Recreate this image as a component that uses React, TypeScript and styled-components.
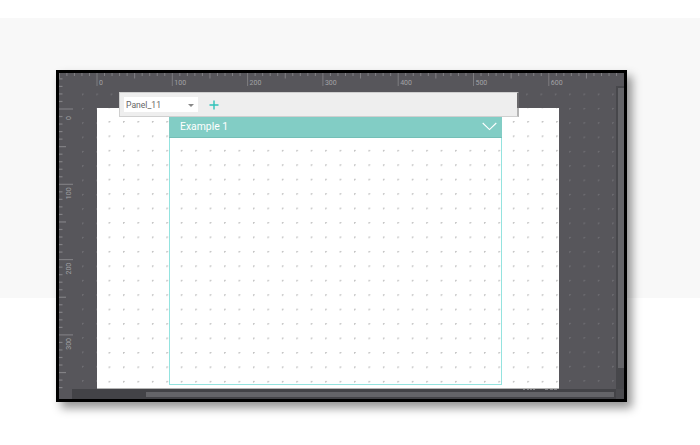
import React from "react";
import styled, { createGlobalStyle } from "styled-components";

const Global = createGlobalStyle`
  html, body { margin: 0; padding: 0; background: #fff; }
  #root { width: 700px; height: 445px; overflow: hidden; }
`;

const Page = styled.main`
  width: 700px;
  height: 445px;
  padding: 70px 0 0 56px;
  box-sizing: border-box;
  font-family: Roboto, "Liberation Sans", sans-serif;
  background: linear-gradient(to bottom, #fff 0 18px, #f8f8f8 18px 298px, #fff 298px);
`;

const Frame = styled.section`
  position: relative;
  width: 571px;
  height: 332px;
  box-sizing: border-box;
  border: 3px solid #000;
  display: grid;
  grid-template-columns: 1fr 8px;
  grid-template-rows: 1fr 10px;
  background-color: #57565b;
  box-shadow: 5px 6px 9px rgba(0, 0, 0, 0.42);
`;

const Workspace = styled.div`
  box-sizing: border-box;
  border-style: solid;
  border-color: #57565b;
  border-width: 13px 0 0 14px;
  padding: 22px 0 0 24px;
  min-width: 0;
  min-height: 0;
  background-clip: padding-box;
  background-image: radial-gradient(circle at 0.7px 0.7px, #6f6e73 0.7px, transparent 1.05px);
  background-size: 14.34px 14.34px;
  background-position: 9px 7.6px;
`;

const Artboard = styled.div`
  width: 462px;
  height: 281px;
  box-sizing: border-box;
  padding: 9px 0 3px 72px;
  background-color: #fff;
  background-image: radial-gradient(circle at 0.7px 0.7px, #c2c2c2 0.7px, transparent 1.1px);
  background-size: 14.45px 14.45px;
  background-position: 11.6px 13px;
  border-bottom: 1px solid #b5b5b5;
`;

const Panel = styled.article`
  width: 333px;
  height: 268px;
  box-sizing: border-box;
  border: 1px solid #94e3df;
  border-top: 0;
`;

const PanelHeader = styled.header`
  height: 21px;
  margin: 0 -1px;
  padding: 0 5px 2px 11px;
  display: flex;
  align-items: center;
  justify-content: space-between;
  background: #82cdc5;
  border-bottom: 1px solid #74bfb7;
  box-sizing: border-box;
  color: #fff;
  font-size: 10.4px;
`;

const Toolbar = styled.div`
  position: absolute;
  left: 60px;
  top: 19px;
  width: 400px;
  height: 25px;
  box-sizing: border-box;
  padding: 4px 0 0 4px;
  display: flex;
  align-items: flex-start;
  gap: 10px;
  background: #eeeeee padding-box;
  border: 1px solid #cfcfcf;
  border-right: 2px solid rgba(120, 120, 120, 0.55);
`;

const Select = styled.div`
  width: 74px;
  height: 15px;
  box-sizing: border-box;
  padding: 0 4px 0 2px;
  display: flex;
  align-items: center;
  justify-content: space-between;
  background: #fff;
  color: #666;
  font-size: 8.6px;
`;

const Caret = styled.span`
  width: 0;
  height: 0;
  margin-top: 1px;
  border-left: 3px solid transparent;
  border-right: 3px solid transparent;
  border-top: 3px solid #888;
`;

const AddButton = styled.button`
  width: 12px;
  height: 15px;
  padding: 0;
  border: 0;
  background: transparent;
  display: flex;
  align-items: center;
  justify-content: center;
`;

const RulerLayer = styled.svg`
  position: absolute;
  left: 0;
  top: 0;
  pointer-events: none;
`;

const VRail = styled.div`
  grid-row: 1;
  grid-column: 2;
  margin-top: 13px;
  padding: 2px 0 21px 2px;
  background: #47474b;
  display: flex;
`;

const VThumb = styled.div`
  flex: 1;
  background: #646468;
`;

const HRail = styled.div`
  grid-row: 2;
  grid-column: 1;
  margin-left: 13px;
  padding: 3px 2px 2px 74px;
  background: #434347;
  display: flex;
`;

const HThumb = styled.div`
  flex: 1;
  background: #646468;
`;

const Corner = styled.div`
  grid-row: 2;
  grid-column: 2;
  background: #4b4b4f;
`;

const STEP = 7.53;
const X0 = 38;
const Y0 = 36;
const W = 565;
const H = 326;
const TICK = "#828185";
const LABEL = "#a3a3a6";

const Rulers = () => {
  const parts: React.ReactNode[] = [];
  for (let i = -5; i * STEP + X0 < W; i++) {
    const x = X0 + i * STEP;
    if (x < 0) continue;
    const major = i % 10 === 0;
    const mid = !major && i % 5 === 0;
    parts.push(
      <line key={`t${i}`} x1={x} x2={x} y1={0} y2={major ? 13 : mid ? 5.5 : 3} stroke={TICK} strokeWidth={major ? 0.9 : 1} />
    );
    if (major && i >= 0) {
      parts.push(
        <text key={`tl${i}`} x={x + 2} y={12.3} fontSize={7} fill={LABEL} fontFamily="Roboto, sans-serif">
          {i * 10}
        </text>
      );
    }
  }
  for (let i = -4; i * STEP + Y0 < 316; i++) {
    const y = Y0 + i * STEP;
    const major = i % 10 === 0;
    const mid = !major && i % 5 === 0;
    parts.push(
      <line key={`l${i}`} x1={0} x2={major ? 14 : mid ? 7 : 3.5} y1={y} y2={y} stroke={TICK} strokeWidth={major ? 1.1 : 1.2} />
    );
    if (major && i >= 0) {
      parts.push(
        <text
          key={`ll${i}`}
          transform={`translate(12 ${y + 9}) rotate(-90)`}
          textAnchor="middle"
          fontSize={7}
          fill={LABEL}
          fontFamily="Roboto, sans-serif"
        >
          {i * 10}
        </text>
      );
    }
  }
  parts.push(
    <path key="edge" d="M464 316.5h2M468 316.5h2M471 316.5h2M474 316.5h2M486 316.5h3M491 316.5h3M495 316.5h3" stroke="#808083" strokeWidth={1} />
  );
  return (
    <RulerLayer width={W} height={H} viewBox={`0 0 ${W} ${H}`} aria-hidden>
      {parts}
    </RulerLayer>
  );
};

export default function App() {
  return (
    <>
      <Global />
      <Page>
        <Frame>
          <Workspace>
            <Artboard>
              <Panel>
                <PanelHeader>
                  <span>Example 1</span>
                  <svg width="15" height="9" viewBox="0 0 15 9" aria-hidden>
                    <path d="M0.7 1 L7.5 7.6 L14.3 1" fill="none" stroke="#fff" strokeWidth="1.1" />
                  </svg>
                </PanelHeader>
              </Panel>
            </Artboard>
          </Workspace>
          <VRail>
            <VThumb />
          </VRail>
          <HRail>
            <HThumb />
          </HRail>
          <Corner />
          <Rulers />
          <Toolbar>
            <Select>
              <span>Panel_11</span>
              <Caret />
            </Select>
            <AddButton aria-label="Add panel">
              <svg width="10" height="10" viewBox="0 0 10 10" aria-hidden>
                <path d="M5 0.5V9.5M0.5 5H9.5" stroke="#2fc2b9" strokeWidth="1.4" fill="none" />
              </svg>
            </AddButton>
          </Toolbar>
        </Frame>
      </Page>
    </>
  );
}
